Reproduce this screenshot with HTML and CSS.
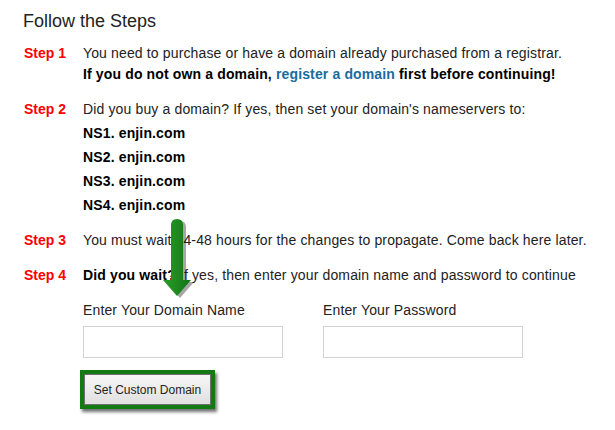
FILE: index.html
```html
<!DOCTYPE html>
<html lang="en">
<head>
  <meta charset="UTF-8" />
  <title>Follow the Steps</title>
  <link rel="stylesheet" href="styles.css">
</head>
<body>
  <div class="page">
    <h2>Follow the Steps</h2>

    <div class="step">
      <div class="step-label">Step 1</div>
      <div class="step-body">
        You need to purchase or have a domain already purchased from a registrar.<br>
        <strong>If you do not own a domain, <a href="#">register a domain</a> first before continuing!</strong>
      </div>
    </div>

    <div class="step">
      <div class="step-label">Step 2</div>
      <div class="step-body">
        Did you buy a domain? If yes, then set your domain's nameservers to:
        <div class="ns">NS1. enjin.com</div>
        <div class="ns">NS2. enjin.com</div>
        <div class="ns">NS3. enjin.com</div>
        <div class="ns">NS4. enjin.com</div>
      </div>
    </div>

    <div class="step">
      <div class="step-label">Step 3</div>
      <div class="step-body">You must wait 24-48 hours for the changes to propagate. Come back here later.</div>
    </div>

    <div class="step">
      <div class="step-label">Step 4</div>
      <div class="step-body">
        <strong>Did you wait?</strong> If yes, then enter your domain name and password to continue

        <div class="fields">
          <div class="field">
            <label for="domainName">Enter Your Domain Name</label>
            <input type="text" id="domainName" />
          </div>
          <div class="field">
            <label for="domainPass">Enter Your Password</label>
            <input type="password" id="domainPass" />
          </div>
        </div>

        <div class="highlight">
          <button>Set Custom Domain</button>
        </div>
      </div>
    </div>

    <svg class="arrow" width="40" height="90" viewBox="0 0 40 90">
      <defs>
        <linearGradient id="arrowFill" x1="0" x2="1" y1="0" y2="0">
          <stop offset="0" stop-color="#2a9a2a"/>
          <stop offset="0.5" stop-color="#1e8a1e"/>
          <stop offset="1" stop-color="#157015"/>
        </linearGradient>
      </defs>
      <path d="M10 9 Q10 3 16 3 Q22 3 22 9 L22 64 L30 64 L16 80 L2 64 L10 64 Z" fill="#000" opacity="0.35" transform="translate(3 2)"/>
      <path d="M10 9 Q10 3 16 3 Q22 3 22 9 L22 64 L30 64 L16 80 L2 64 L10 64 Z" fill="url(#arrowFill)"/>
    </svg>
  </div>
</body>
</html>
```

FILE: styles.css
```css
body {
  margin: 0;
  background: #fff;
  font-family: Arial, "Liberation Sans", sans-serif;
  font-size: 14px;
  color: #222;
}

.page {
  position: relative;
  padding: 11px 0 0 24px;
}

h2 {
  margin: 0 0 11px -1px;
  font-size: 18px;
  font-weight: normal;
  line-height: 21px;
  color: #222;
}

.step {
  display: flex;
  margin-bottom: 14px;
  line-height: 21px;
  letter-spacing: 0.14px;
}

.step-label {
  width: 59px;
  flex-shrink: 0;
  color: #f00;
  font-weight: bold;
  letter-spacing: 0;
}

.step-body strong {
  color: #000;
}

a {
  color: #1b6b9d;
  text-decoration: none;
}

.ns {
  margin-top: 3px;
  font-weight: bold;
  color: #000;
}

.fields {
  display: flex;
  gap: 40px;
  margin-top: 14px;
}

.field label {
  display: block;
  margin-bottom: 5px;
}

.field input {
  display: block;
  width: 200px;
  height: 32px;
  box-sizing: border-box;
  border: 1px solid #d3d3d3;
  padding: 4px 6px;
  font-size: 14px;
}

.highlight {
  display: inline-block;
  margin: 12px 0 0 -3px;
  border: 4px solid #127a12;
  box-shadow: 2px 3px 3px rgba(0, 0, 0, 0.55);
  line-height: normal;
  letter-spacing: 0;
}

button {
  display: block;
  margin: 0;
  padding: 0 8px;
  height: 31px;
  width: 127px;
  font-family: Arial, "Liberation Sans", sans-serif;
  font-size: 12px;
  color: #222;
  background: linear-gradient(#f6f6f6, #e0e0e0);
  border: 1px solid #707070;
  cursor: pointer;
}

.arrow {
  position: absolute;
  left: 161px;
  top: 216px;
}
```
